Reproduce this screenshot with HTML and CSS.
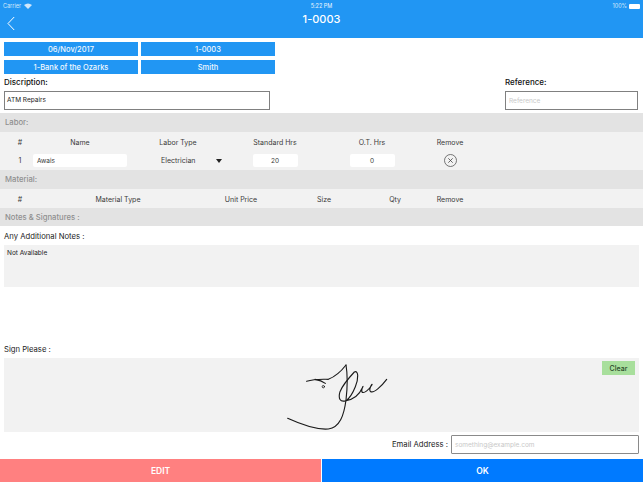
FILE: index.html
```html
<!DOCTYPE html>
<html lang="en">
<head>
<meta charset="utf-8">
<title>1-0003</title>
<link rel="stylesheet" href="styles.css">
</head>
<body>
<div class="app">
  <header class="nav">
    <div class="status">
      <span class="carrier">Carrier
        <svg class="wifi" width="8" height="6" viewBox="0 0 8 6"><path d="M4 6 0 2Q4-1 8 2Z" fill="#cfe6fb"/></svg>
      </span>
      <span class="time">5:22 PM</span>
      <span class="batt">100% <i class="batt-icon"></i></span>
    </div>
    <div class="titlebar">
      <svg class="back" width="8" height="15" viewBox="0 0 8 15"><path d="M7.2 1 1 7.5 7.2 14" fill="none" stroke="#fff" stroke-width="1"/></svg>
      <h1 class="title">1-0003</h1>
    </div>
  </header>

  <section class="chips">
    <div class="chip">06/Nov/2017</div>
    <div class="chip">1-0003</div>
    <div class="chip">1-Bank of the Ozarks</div>
    <div class="chip">Smith</div>
  </section>

  <section class="fields">
    <div class="field field-desc">
      <div class="field-label">Discription:</div>
      <div class="box box-desc">ATM Repairs</div>
    </div>
    <div class="field field-ref">
      <div class="field-label">Reference:</div>
      <div class="box box-ref">Reference</div>
    </div>
  </section>

  <div class="band">Labor:</div>
  <section class="labor">
    <div class="grid grid-labor">
      <span>#</span><span>Name</span><span>Labor Type</span><span>Standard Hrs</span><span>O.T. Hrs</span><span>Remove</span>
    </div>
    <div class="grid grid-labor row-values">
      <span>1</span>
      <span class="pill pill-name">Awais</span>
      <span class="select">Electrician<i class="caret"></i></span>
      <span class="pill pill-num">20</span>
      <span class="pill pill-num">0</span>
      <span class="remove">
        <svg width="13" height="13" viewBox="0 0 13 13"><circle cx="6.5" cy="6.5" r="6" fill="none" stroke="#555" stroke-width=".8"/><path d="M4.3 4.3 8.7 8.7M8.7 4.3 4.3 8.7" stroke="#444" stroke-width=".8"/></svg>
      </span>
    </div>
  </section>

  <div class="band">Material:</div>
  <section class="material">
    <div class="grid grid-material">
      <span>#</span><span>Material Type</span><span>Unit Price</span><span>Size</span><span>Qty</span><span>Remove</span>
    </div>
  </section>

  <div class="band band-notes">Notes &amp; Signatures :</div>

  <section class="notes">
    <div class="section-label">Any Additional Notes :</div>
    <div class="notes-box">Not Available</div>
  </section>

  <section class="sign">
    <div class="section-label">Sign Please :</div>
    <div class="sign-box">
      <svg class="signature" width="150" height="74" viewBox="0 24 450 222">
        <g fill="none" stroke="#1a1a1a" stroke-width="3.4" stroke-linecap="round">
          <path d="M83 205C120 222 170 240 205 237C240 232 252 195 258 150C262 115 264 80 258 45"/>
          <path d="M140 94C165 86 190 88 205 88C225 80 245 62 258 45"/>
          <path d="M165 88C178 90 188 94 196 100"/>
          <circle cx="190" cy="110" r="3.5" stroke-width="2.5"/>
          <path d="M258 152C240 158 234 145 240 125C248 105 270 80 283 66C296 60 296 85 286 110C278 130 268 145 258 152C285 148 300 130 308 112C312 102 302 122 306 126C312 132 328 118 336 104C338 98 324 120 332 125C342 130 365 108 380 88"/>
        </g>
      </svg>
      <button class="clear" type="button">Clear</button>
    </div>
  </section>

  <section class="email">
    <span class="email-label">Email Address :</span>
    <div class="email-box">something@example.com</div>
  </section>

  <footer class="actions">
    <div class="action action-edit">EDIT</div>
    <div class="action action-ok">OK</div>
  </footer>
</div>
</body>
</html>
```
FILE: styles.css
```css
* { box-sizing: border-box; }
html, body { margin: 0; padding: 0; }
body { background: #fff; font-family: Inter, "Liberation Sans", sans-serif; color: #1c1c1c; }
.app { width: 643px; height: 482px; overflow: hidden; display: flex; flex-direction: column; }

.nav { height: 38px; background: #2196f3; color: #fff; flex: none; }
.status { height: 11px; padding: 1px 3px 0 3px; display: grid; grid-template-columns: 1fr auto 1fr; align-items: center; font-size: 5.5px; color: #d5e9fb; }
.carrier { display: flex; align-items: center; gap: 3px; }
.time { text-align: center; color: #eef6fe; }
.batt { display: flex; justify-content: flex-end; align-items: center; gap: 2px; }
.batt-icon { display: block; width: 11px; height: 5px; background: #fff; border-radius: 1px; }
.titlebar { position: relative; height: 27px; display: flex; align-items: center; justify-content: center; padding-bottom: 11px; }
.title { margin: 0; font-size: 11px; font-weight: 500; letter-spacing: 0; color: #fff; }
.back { position: absolute; left: 7px; top: 5px; }

.chips { flex: none; display: grid; grid-template-columns: 134px 134px; column-gap: 3px; row-gap: 4px; padding: 4px 0 0 4px; }
.chip { height: 14px; background: #2196f3; color: #f2f8fe; font-size: 7.5px; font-weight: 500; display: flex; align-items: center; justify-content: center; }

.fields { flex: none; display: flex; justify-content: space-between; padding: 0 5px 0 4px; height: 39px; }
.field-label { font-size: 8px; font-weight: 500; line-height: 9px; margin: 4px 0 4px; color: #111; }
.box { height: 19px; background: #fff; border: 1px solid #808080; font-size: 6.5px; padding: 0 2px; display: flex; align-items: center; }
.box-desc { width: 266px; color: #222; padding-bottom: 2px; }
.box-ref { width: 133px; color: #c8c8c8; padding-left: 3px; }

.band { flex: none; height: 19px; background: #e3e3e3; color: #8f8f8f; font-size: 7.7px; font-weight: 500; padding-left: 5px; display: flex; align-items: center; }
.band-notes { height: 18px; }

.labor { flex: none; height: 38px; background: #f2f2f2; }
.material { flex: none; height: 19px; background: #f2f2f2; }
.grid { display: grid; height: 19px; padding: 1px 0 0 8px; align-items: center; justify-items: center; font-size: 7px; color: #3a3a3a; }
.grid-labor { grid-template-columns: 24px 96px 100px 94px 100px 56px; }
.grid-material { grid-template-columns: 24px 172px 74px 92px 50px 60px; }
.row-values { height: 19px; padding-top: 0; }
.pill { background: #fff; border-radius: 2px; height: 13px; display: flex; align-items: center; font-size: 6.5px; }
.pill-name { width: 94px; padding-left: 4px; justify-self: center; }
.pill-num { width: 45px; justify-content: center; }
.select { justify-self: start; margin-left: 33px; display: flex; align-items: center; font-size: 7px; }
.caret { display: block; margin-left: 21px; width: 0; height: 0; border-left: 3px solid transparent; border-right: 3px solid transparent; border-top: 4px solid #222; }
.remove { display: flex; }

.section-label { font-size: 7.7px; line-height: 9px; color: #222; padding-left: 4px; }
.notes { flex: none; height: 119px; padding-top: 6px; }
.notes-box { margin: 4px 4px 0; height: 42px; background: #f2f2f2; font-size: 6.5px; padding: 4px 3px; color: #222; }

.sign { flex: none; height: 87px; }
.sign-box { position: relative; margin: 4px 4px 0 4px; height: 74px; background: #f2f2f2; display: flex; justify-content: center; }
.signature { margin-left: 27px; }
.clear { position: absolute; top: 3px; right: 4px; width: 33px; height: 14px; padding: 0; border: 0; background: #a8df9c; color: #2a4a2a; font: 500 7px Inter, "Liberation Sans", sans-serif; }

.email { flex: none; height: 27px; display: flex; justify-content: flex-end; align-items: flex-start; gap: 3px; padding: 3px 4px 0 0; }
.email-label { font-size: 7.7px; line-height: 19px; color: #222; }
.email-box { width: 188px; height: 19px; border: 1px solid #8a8a8a; border-radius: 1px; font-size: 6.5px; color: #c8c8c8; padding-left: 3px; display: flex; align-items: center; }

.actions { flex: none; height: 23px; display: flex; gap: 1px; }
.action { flex: 1; display: flex; align-items: center; justify-content: center; color: #fff; font-size: 8.5px; font-weight: 600; }
.action-edit { background: #ff8080; }
.action-ok { background: #007aff; }
```
